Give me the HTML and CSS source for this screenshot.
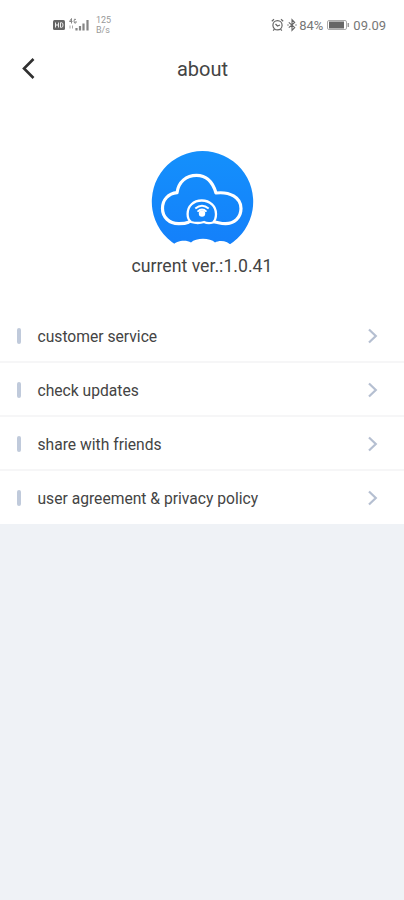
FILE: index.html
```html
<!DOCTYPE html>
<html lang="en">
<head>
<meta charset="utf-8">
<title>about</title>
<link rel="stylesheet" href="styles.css">
</head>
<body>
<div class="status">
  <div class="status-left">
    <svg width="38" height="16" viewBox="0 0 38 16">
      <rect x="0" y="3" width="12" height="10" rx="1.5" fill="#666"/>
      <path d="M2.5 5.5v5M5.5 5.5v5M2.5 8h3M7.5 5.7v4.6h1q1.5 0 1.500-2.300t-1.500-2.300z" fill="none" stroke="#eee" stroke-width="1"/>
      <path d="M18.500 1.500l-2 3h3M18.500 1.500v5M23 2.500q-2-1.500-2 1.500t2 2v-2" fill="none" stroke="#888" stroke-width="1"/>
      <path d="M17 8.500v3M19.500 8.500v3" stroke="#aaa" stroke-width="1"/>
      <path d="M23.500 11v2.500M27 9v4.500M30.500 6.500v7M34.500 3v10.500" stroke="#858585" stroke-width="2.200"/>
    </svg>
    <div class="speed"><span>125</span><span>B/s</span></div>
  </div>
  <div class="status-right">
    <svg width="13" height="14" viewBox="0 0 13 14" fill="none" stroke="#666" stroke-width="1.200">
      <circle cx="6.500" cy="7.300" r="4.600"/><path d="M.8 3.200L3 1.300M12.200 3.200L10 1.300M4.500 6l2 2 2.500-1M3.500 11l-1.300 1.700M9.500 11l1.300 1.700"/>
    </svg>
    <svg class="bluetooth" width="10" height="14" viewBox="0 0 10 14" fill="none" stroke="#666" stroke-width="1.100">
      <path d="M1.800 4.300l5.900 5.200L5 12.300V1.700l2.700 2.800-5.900 5.200M.3 7h1.400M8.300 7h1.400"/>
    </svg>
    <span class="percent">84%</span>
    <svg class="battery" width="23" height="12" viewBox="0 0 23 12">
      <rect x=".5" y="1.500" width="19" height="9" rx="1.500" fill="#fff" stroke="#aaa"/>
      <rect x="2" y="2.500" width="15" height="7" fill="#666"/>
      <path d="M21.300 4v4" stroke="#999" stroke-width="1.500"/>
    </svg>
    <span class="time">09.09</span>
  </div>
</div>
<header class="header">
  <svg class="back" width="16" height="24" viewBox="0 0 16 24"><path d="M13.500 2L4 11.500l9.500 9.500" fill="none" stroke="#303030" stroke-width="2.600"/></svg>
  <h1>about</h1>
</header>
<section class="brand">
  <svg width="104" height="96" viewBox="0 0 104 96">
    <defs><linearGradient id="sky" x1="0" y1="0" x2="0" y2="1"><stop offset="0" stop-color="#1490fc"/><stop offset="1" stop-color="#1480fa"/></linearGradient></defs>
    <path d="M26.100 94A50.700 50.700 0 1 1 78.900 94Z" fill="url(#sky)"/>
    <path d="M22 95C26 89.500 36 88.500 41 91.500C46 86.500 60 86.500 65 91.500C70 88.500 78 90 82 95V96H22Z" fill="#fff"/>
    <path d="M38.500 71.200C35 72.700 31.500 72.600 28.500 72.600C19 72.600 12.500 66 12.500 57.500C12.500 48.500 18.500 42.500 27 41.700C28.500 30.500 36.500 24.400 46.500 24.400C56 24.400 62.500 30 66 42C79.500 40.500 91 46 91 57.500C91 67 84 72.600 75.500 72.600C70.500 72.600 68.500 71.500 64.500 71" fill="none" stroke="#fff" stroke-width="3.200" stroke-linecap="round" stroke-linejoin="round"/>
    <path d="M41 71C37.800 68.500 37.600 65 37.600 63C37.600 55 43.500 49.500 51.800 49.500S66 55.500 66 63C66 66 65.700 69 63 71.500Q58 73 54 71Q48 73 41 71Z" fill="none" stroke="#fff" stroke-width="2.300"/>
    <path d="M45.300 57.500Q52 51.800 58.700 57.500M47.500 60.600Q52 56.600 56.500 60.600" fill="none" stroke="#fff" stroke-width="1.900"/>
    <circle cx="52" cy="62.500" r="3.200" fill="#fff"/>
  </svg>
  <p>current ver.:1.0.41</p>
</section>
<nav class="menu">
  <div class="row"><i></i><span>customer service</span><svg width="10" height="16" viewBox="0 0 10 16"><path d="M1 1.500L7.800 8 1 14.500"/></svg></div>
  <div class="row"><i></i><span>check updates</span><svg width="10" height="16" viewBox="0 0 10 16"><path d="M1 1.500L7.800 8 1 14.500"/></svg></div>
  <div class="row"><i></i><span>share with friends</span><svg width="10" height="16" viewBox="0 0 10 16"><path d="M1 1.500L7.800 8 1 14.500"/></svg></div>
  <div class="row"><i></i><span>user agreement &amp; privacy policy</span><svg width="10" height="16" viewBox="0 0 10 16"><path d="M1 1.500L7.800 8 1 14.500"/></svg></div>
</nav>
</body>
</html>
```
FILE: styles.css
```css
* { box-sizing: border-box; }
body { margin: 0; min-height: 900px; background: #eff2f6; color: #444; font-family: Roboto, sans-serif; }
.status { height: 44px; padding: 6px 18px 0 53px; background: #fff; display: flex; justify-content: space-between; align-items: center; color: #777; }
.status-left, .status-right { display: flex; align-items: center; }
.speed { display: flex; flex-direction: column; margin-left: 5px; font-size: 9px; line-height: 10px; color: #999; }
.bluetooth { margin-left: 3px; }
.percent { margin-left: 2px; font-size: 13px; }
.battery { margin-left: 4px; }
.time { margin-left: 3px; font-size: 13px; }
.header { height: 50px; padding-left: 20px; background: #fff; display: grid; grid-template-columns: 16px 1fr 35px; align-items: center; }
.header h1 { margin: 0; font-size: 20px; font-weight: 400; text-align: center; }
.brand { height: 215px; padding-top: 57px; background: #fff; display: flex; flex-direction: column; align-items: center; }
.brand p { margin: 7px 0 0; font-size: 17.700px; line-height: 24px; }
.menu { background: #fff; }
.row { height: 54px; padding: 2px 26px 0 17px; display: flex; align-items: center; border-bottom: 2px solid #f6f6f7; font-size: 15.650px; }
.row:last-child { height: 53px; padding-top: 1px; border-bottom: 0; }
.row i { width: 4px; height: 16px; margin-right: 16.500px; border-radius: 2px; background: #c0cadb; }
.row svg { margin-left: auto; fill: none; stroke: #b5bfd1; stroke-width: 2.200; }
```
